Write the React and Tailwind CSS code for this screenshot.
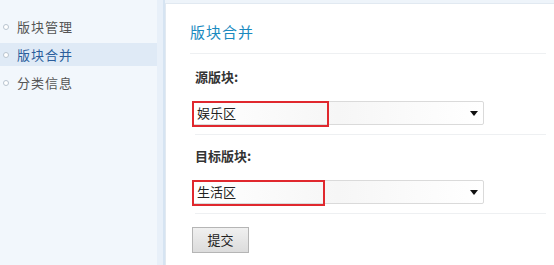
const menu = [
  { label: '版块管理', active: false },
  { label: '版块合并', active: true },
  { label: '分类信息', active: false },
];

function Field({ label, value, redWidth }) {
  return (
    <div className="border-b border-[#eef0f2] pb-[9px]">
      <p className="text-[13px] font-bold text-[#333] h-[20px] leading-[20px]">{label}</p>
      <div className="relative mt-[14px] ml-[-3px] w-[292px] h-[24px] border border-[#dadada] rounded-[2px] bg-gradient-to-r from-[#ffffff] via-[#f6f6f6] to-[#ffffff] flex items-center">
        <span className="pl-[4px] text-[13px] text-[#222]">{value}</span>
        <span className="absolute right-[5px] top-[9px] w-0 h-0 border-l-[4px] border-r-[4px] border-t-[5px] border-l-transparent border-r-transparent border-t-[#111]" />
        <div
          className={`absolute left-[-1px] top-[-1px] h-[26px] border-2 border-[#e0282e] ${redWidth}`}
        />
      </div>
    </div>
  );
}

export default function App() {
  return (
    <div
      className="w-[554px] h-[265px] flex bg-[#eef4fa] overflow-hidden"
      style={{ fontFamily: '"Noto Sans CJK SC", "Liberation Sans", sans-serif' }}
    >
      {/* Sidebar */}
      <div className="w-[157px] shrink-0 bg-[#f2f7fc] pt-[15px]">
        {menu.map(m => (
          <div
            key={m.label}
            className={`h-[23px] mb-[5px] flex items-center pl-[3px] gap-[8px] text-[13px] ${
              m.active ? 'bg-[#dfeaf6] text-[#2a5d9c]' : 'text-[#555]'
            }`}
          >
            <span className="w-[6px] h-[6px] rounded-full border border-[#b8c4cf] bg-white" />
            <span className="tracking-[1px]">{m.label}</span>
          </div>
        ))}
      </div>
      <div className="w-[6px] shrink-0 bg-[#e8f0f9]" />
      <div className="w-[2px] shrink-0 bg-[#d6e4f2]" />

      {/* Content */}
      <div className="flex-1 mt-[3px] bg-white border-t border-l border-[#e1e9f1] pl-[24px] pr-[8px]">
        <h2 className="h-[50px] pt-[17px] text-[15px] text-[#1a8ac0] tracking-[1px] border-b border-[#eef0f2]">
          版块合并
        </h2>
        <div className="pl-[5px] pt-[13px]">
          <Field label="源版块:" value="娱乐区" redWidth="w-[137px]" />
          <div className="pt-[11px]">
            <Field label="目标版块:" value="生活区" redWidth="w-[133px]" />
          </div>
          <button className="mt-[13px] ml-[-3px] w-[57px] h-[26px] border border-[#b5b5b5] bg-gradient-to-b from-[#f0f0f0] to-[#dcdcdc] text-[13px] text-[#222]">
            提交
          </button>
        </div>
      </div>
    </div>
  );
}
